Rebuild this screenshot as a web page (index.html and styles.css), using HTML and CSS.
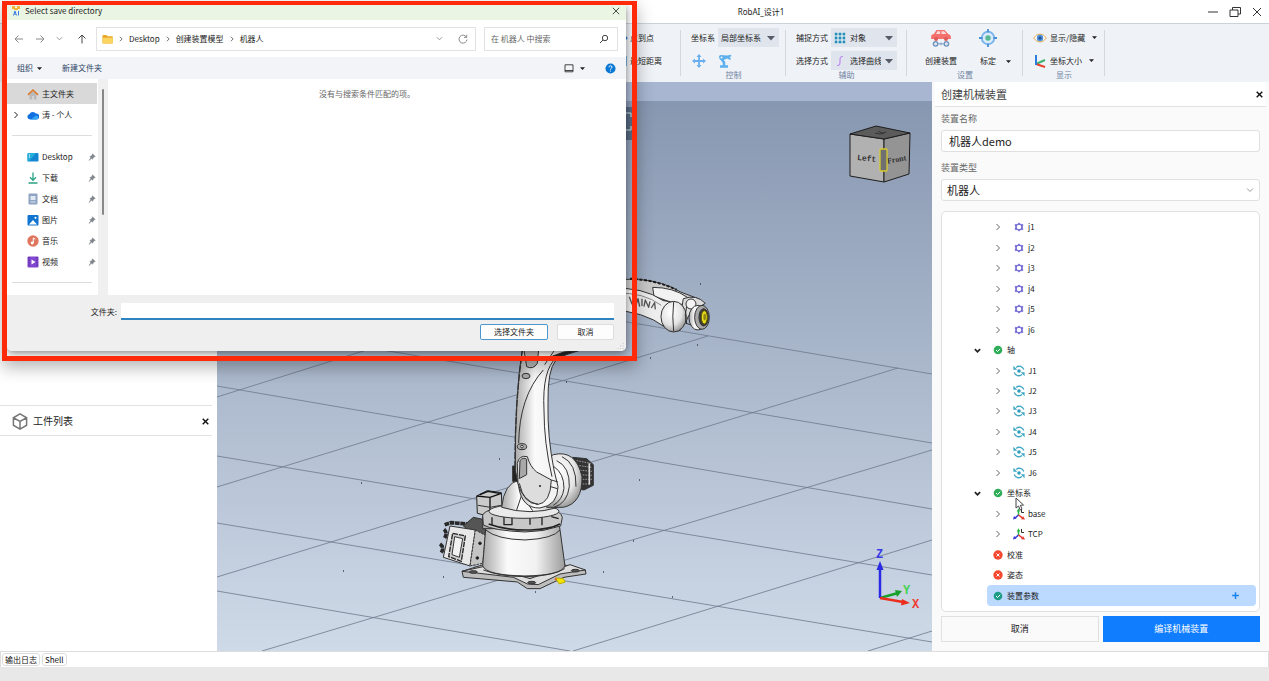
FILE: index.html
```html
<!DOCTYPE html>
<html lang="zh-CN">
  <head>
    <meta charset="utf-8" />
    <title>RobAI_设计1</title>
    <link rel="stylesheet" href="styles.css">
  </head>
  <body>
    <!-- shared icons -->
    <svg class="sprite" aria-hidden="true">
      <symbol id="i-right" viewBox="0 0 8 8"><path d="M2.5 1l3 3-3 3" fill="none" stroke="currentColor" /></symbol>
      <symbol id="i-down" viewBox="0 0 8 8"><path d="M1 2.5l3 3 3-3" fill="none" stroke="currentColor" /></symbol>
      <symbol id="i-caret" viewBox="0 0 8 8"><path d="M0 2h8L4 6.500z" fill="currentColor" /></symbol>
      <symbol id="i-close" viewBox="0 0 10 10"><path d="M1 1l8 8M9 1L1 9" fill="none" stroke="currentColor" /></symbol>
      <symbol id="i-ok" viewBox="0 0 10 10">
        <circle cx="5" cy="5" r="4.300" fill="currentColor" />
        <path d="M3 5l1.500 1.500L7.200 3.800" fill="none" stroke="#fff" />
      </symbol>
      <symbol id="i-bad" viewBox="0 0 10 10">
        <circle cx="5" cy="5" r="4.700" fill="#f5492f" />
        <path d="M3.500 3.500l3 3M6.500 3.500l-3 3" fill="none" stroke="#fff" />
      </symbol>
      <symbol id="i-link" viewBox="0 0 10 10">
        <path d="M5 .8l1.500 1.500 2.500.1-.6 2.600.6 2.600-2.500.1L5 9.200 3.500 7.700 1 7.600 1.600 5 1 2.400l2.500-.1z" fill="#6a62d2" stroke="#6a62d2" stroke-width=".5" />
        <circle cx="5" cy="5" r="2.300" fill="#fff" />
      </symbol>
      <symbol id="i-axis" viewBox="0 0 12 12">
        <path d="M3 2.400A5 5 0 0 1 10.800 4.500M9 9.600A5 5 0 0 1 1.200 7.500" fill="none" stroke="#3fa6c4" stroke-width="1.300" />
        <path d="M.4.8v4h3.800zM11.600 11.200v-4H7.800z" fill="#3fa6c4" />
        <circle cx="6" cy="6" r="1.800" fill="#2f9dbd" />
      </symbol>
      <symbol id="i-frame" viewBox="0 0 12 12">
        <path d="M5.500 7V2" stroke="#31b24a" stroke-width="1.500" /><path d="M3.700 3.500l1.800-3.300 1.800 3.300z" fill="#31b24a" />
        <path d="M5.500 7l-3.500 3" stroke="#3b37d8" stroke-width="1.500" /><path d="M0 11.500l1-3.500 2.500 2.500z" fill="#3b37d8" />
        <path d="M5.500 7l4 2.800" stroke="#e5362b" stroke-width="1.500" /><path d="M12 11.500l-4-.3 2.200-3z" fill="#e5362b" />
        <path d="M8.500 1v3.500H11" fill="none" stroke="#333" />
      </symbol>
      <symbol id="i-pin" viewBox="0 0 8 8">
        <path d="M4.500.8l2.800 2.700-1.500.5-1.300 2.300-1-1L1 7.500 2.800 4.700l-1-1L4 2.400z" fill="#80868d" stroke="#80868d" stroke-width=".5" />
      </symbol>
    </svg>

    <header class="titlebar">
      <span></span>
      <h1>RobAI_设计1</h1>
      <div class="window-buttons">
        <button aria-label="最小化"><svg viewBox="0 0 12 12"><path d="M1 6h10" stroke="#333" /></svg></button>
        <button aria-label="还原"><svg viewBox="0 0 12 12"><path d="M1 4h8v6.500H1zM3.500 4V1.500h8V8H9" fill="none" stroke="#333" /></svg></button>
        <button aria-label="关闭"><svg viewBox="0 0 12 12"><path d="M2 2l8 8M10 2l-8 8" stroke="#333" /></svg></button>
      </div>
    </header>

    <nav class="ribbon">
      <div class="group group-measure">
        <div class="row"><button><svg class="ico" viewBox="0 0 12 12"><path d="M1 6h10" stroke="#9ab" /><circle cx="10" cy="6" r="1.500" fill="#2384e0" /></svg>点到点</button></div>
        <div class="row"><button><svg class="ico" viewBox="0 0 12 12"><path d="M2 1v10M10 1v10" stroke="#7fb6ea" stroke-width="2" /></svg>最短距离</button></div>
      </div>
      <div class="group group-control">
        <div class="row">
          <label for="coord">坐标系</label>
          <div class="pick">
            <select id="coord"><option>局部坐标系</option></select>
            <svg class="caret"><use href="#i-caret" /></svg>
          </div>
        </div>
        <div class="row tools">
          <button aria-label="移动">
            <svg class="ico-l" viewBox="0 0 14 14"><path d="M7 2v10M2 7h10" stroke="#69aef0" stroke-width="1.800" /><path d="M7 0l2.500 3h-5zM7 14l2.500-3h-5zM0 7l3-2.500v5zM14 7l-3-2.500v5z" fill="#69aef0" /></svg>
          </button>
          <button aria-label="机械臂">
            <svg class="ico-l" viewBox="0 0 14 14"><path d="M2 12.500h8M6 12.500V8.500L3.500 5" fill="none" stroke="#5cb0ee" stroke-width="2.500" /><path d="M1 2.500q0-1.500 2-1.500l6 .5L13 .8l.5 1.500-2 .7 1.500 2-1 1-2.500-1.500L4 6.500Q1 6 1 2.500z" fill="#5cb0ee" /><circle cx="3.500" cy="3.500" r="1" fill="#eff2f7" /></svg>
          </button>
        </div>
        <p>控制</p>
      </div>
      <div class="group group-assist">
        <div class="row">
          <label for="snap">捕捉方式</label>
          <div class="pick">
            <svg class="ico" viewBox="0 0 12 12"><path d="M2 2h8v8H2zM6 2v8M2 6h8" fill="none" stroke="#8cc6dc" /><path d="M.8.8h2.400v2.400H.8zM4.800.8h2.400v2.400H4.800zM8.800.8h2.400v2.400H8.800zM.8 4.800h2.400v2.400H.8zM4.800 4.800h2.400v2.400H4.800zM8.800 4.800h2.400v2.400H8.800zM.8 8.800h2.400v2.400H.8zM4.800 8.800h2.400v2.400H4.800zM8.800 8.800h2.400v2.400H8.800z" fill="#258fba" /></svg>
            <select id="snap"><option>对象</option></select>
            <svg class="caret"><use href="#i-caret" /></svg>
          </div>
        </div>
        <div class="row">
          <label for="choose">选择方式</label>
          <div class="pick">
            <svg class="ico" viewBox="0 0 12 12"><path d="M3 10.500c3 0 3-1 3-4.500s0-4.500 3-4.500" fill="none" stroke="#bd8cf0" stroke-width="1.200" /></svg>
            <select id="choose"><option>选择曲线</option></select>
            <svg class="caret"><use href="#i-caret" /></svg>
          </div>
        </div>
        <p>辅助</p>
      </div>
      <div class="group group-setup">
        <div class="big-tools">
          <button>
            <svg viewBox="0 0 24 20"><path d="M1 11V8q0-2 3-2.500L7 1h9l4 4.500q3 .5 3 3V11H1z" fill="#f3706c" /><path d="M6.500 5.500L8 2.500h3v3zM12.500 2.500h3L18 5.500h-5.500z" fill="#fbdcd9" /><circle cx="6.500" cy="11" r="2.200" fill="#e05a57" /><circle cx="17.500" cy="11" r="2.200" fill="#e05a57" /><circle cx="6" cy="16.500" r="2.500" fill="#dfe6f0" stroke="#6e93bd" stroke-width="1.500" /><circle cx="18" cy="16.500" r="2.500" fill="#dfe6f0" stroke="#6e93bd" stroke-width="1.500" /><path d="M9 16.500h6M12 15v3" stroke="#6e93bd" /></svg>
            <span>创建装置</span>
          </button>
          <button>
            <svg viewBox="0 0 20 20"><circle cx="10" cy="10" r="7" fill="#dbeafa" stroke="#78b4ef" stroke-width="2" /><path d="M10 0v4M10 16v4M0 10h4M16 10h4" stroke="#4a8fd6" stroke-width="2" /><circle cx="10" cy="10" r="3" fill="#57b893" /></svg>
            <span>标定<svg class="caret-s"><use href="#i-caret" /></svg></span>
          </button>
        </div>
        <p>设置</p>
      </div>
      <div class="group group-show">
        <div class="row">
          <button>
            <svg class="ico-l" viewBox="0 0 14 14"><path d="M.5 7Q7-1 13.500 7 7 15 .5 7z" fill="#fff" stroke="#d8a94c" /><circle cx="7" cy="7" r="3.200" fill="#4b8fe0" /><circle cx="7" cy="7" r="1.600" fill="#24508f" /></svg>显示/隐藏<svg class="caret-s"><use href="#i-caret" /></svg>
          </button>
        </div>
        <div class="row">
          <button>
            <svg class="ico-l" viewBox="0 0 14 14"><path d="M3 10l9-4" stroke="#3cb371" stroke-width="2" /><path d="M3 10l9 3" stroke="#e8432e" stroke-width="2" /><path d="M3 1v10" stroke="#2b7de0" stroke-width="2" /></svg>坐标大小<svg class="caret-s"><use href="#i-caret" /></svg>
          </button>
        </div>
        <p>显示</p>
      </div>
    </nav>

    <main class="workspace">
      <aside class="left">
        <section class="model-list"></section>
        <section class="part-list">
          <header>
            <svg class="cube" viewBox="0 0 16 18"><path d="M8 1l7 4v8l-7 4-7-4V5zM1 5l7 4 7-4M8 9v8" fill="none" stroke="#777" stroke-width="1.600" /></svg>
            <h2>工件列表</h2>
            <button aria-label="关闭工件列表"><svg class="x"><use href="#i-close" /></svg></button>
          </header>
        </section>
      </aside>

      <section class="viewport">
        <svg class="scene" viewBox="217 82 715 569" preserveAspectRatio="xMidYMid slice">
          <defs>
            <linearGradient id="sky" x1="0" y1="0" x2="0" y2="1">
              <stop offset="0" stop-color="#8595af" />
              <stop offset="1" stop-color="#cfdae8" />
            </linearGradient>
            <linearGradient id="metal" x1="0" y1="0" x2="1" y2="0">
              <stop offset="0" stop-color="#a9a9a9" />
              <stop offset="0.300" stop-color="#fafafa" />
              <stop offset="0.650" stop-color="#f1f1f1" />
              <stop offset="1" stop-color="#9c9c9c" />
            </linearGradient>
            <radialGradient id="ball" cx="0.400" cy="0.350" r="0.700">
              <stop offset="0" stop-color="#fff" />
              <stop offset="0.600" stop-color="#e4e4e4" />
              <stop offset="1" stop-color="#8e8e8e" />
            </radialGradient>
          </defs>
          <rect x="217" y="82" width="715" height="569" fill="url(#sky)" />
          <rect x="217" y="82" width="715" height="19" fill="#a8b6d1" />
          <rect x="600" y="107" width="34" height="33" fill="#566882" />
          <path d="M626 113h5v4M626 130h5v-4" fill="none" stroke="#c9e4dd" />

          <!-- floor grid -->
          <g stroke="#6d788b" stroke-width="0.800">
            <path d="M217 252L932 374M217 322L932 443M217 386L932 509M217 456L932 575M217 523L932 642M217 591L570 651" />
            <path d="M217 397L430 330M217 487L708 336M217 577L898 368M262 651L932 450M573 651L932 540M868 651L932 631" />
          </g>
          <path d="M700 284h1M697 345h1M566 382h1M650 358h1M639 480h1M603 572h1M633 541h1M443 577h1M535 592h1M672 597h1M499 459h1M343 571h1M361 483h1" stroke="#39404c" stroke-width="1.500" />

          <!-- robot -->
          <g transform="translate(430 270) scale(0.3333)" stroke="#333" stroke-width="3" stroke-linejoin="round">
            <!-- upper arm -->
            <path d="M540 28L625 28Q700 34 752 66L810 88 800 120 700 90 540 60z" fill="#c9c9c9" />
            <path d="M668 52Q730 52 772 82L770 106Q720 100 672 78z" fill="#f2f2f2" />
            <path d="M600 26Q680 30 740 60" fill="none" stroke="#1c1c1c" stroke-width="6" stroke-dasharray="9 5" />
            <path d="M540 55Q640 50 700 92L745 98 752 180Q725 192 706 172 640 122 540 120z" fill="#eee" />
            <path d="M560 70Q640 66 694 106" fill="none" stroke="#888" />
            <path d="M598 80l8 22 6-16 6 20 6-20 5 24M636 86v22M642 110l4-20 10 22 4-18M664 114l10-16 2 20" fill="none" stroke="#555" stroke-width="4" />
            <path d="M760 86Q800 72 826 100L806 112Q780 118 766 160L750 150z" fill="#ddd" />
            <circle cx="783" cy="102" r="15" fill="#f4f4f4" />
            <ellipse cx="731" cy="140" rx="38" ry="46" fill="url(#ball)" />
            <path d="M731 96Q726 140 731 184" fill="none" />
            <path d="M768 160l20 6M770 110q-8 24 0 50" fill="none" />
            <ellipse cx="804" cy="143" rx="27" ry="37" fill="url(#metal)" />
            <ellipse cx="816" cy="142" rx="22" ry="36" fill="#a8a8a8" />
            <ellipse cx="821" cy="142" rx="14" ry="26" fill="#3a3a3a" />
            <ellipse cx="823" cy="142" rx="9" ry="20" fill="#e9dc1c" stroke="#5b5500" />
            <ellipse cx="824" cy="141" rx="4" ry="10" fill="#8f8714" stroke="none" />

            <!-- foot plate -->
            <path d="M96 904L160 884 260 900 400 884 466 900 468 912 402 922 330 956 292 956 262 936 100 922z" fill="#bdbdbd" />
            <path d="M96 904L168 888 300 926 420 884 466 900 390 912 325 944 292 942 250 922z" fill="#dedede" />
            <ellipse cx="130" cy="906" rx="12" ry="4" fill="#555" /><ellipse cx="436" cy="902" rx="12" ry="4" fill="#555" /><ellipse cx="305" cy="938" rx="12" ry="4" fill="#555" />

            <!-- cable box -->
            <path d="M44 764l18-6 50 4M42 778q12 10 2 26M30 822q14 10 4 26" fill="none" stroke="#282828" stroke-width="11" stroke-dasharray="14 2" />
            <path d="M100 768L130 742 168 750 166 795 140 800z" fill="#555" />
            <path d="M60 768L136 780 120 888 40 862z" fill="#e8e8e8" />
            <path d="M136 780L166 796 158 880 120 888z" fill="#c4c4c4" stroke-dasharray="7 3" />
            <path d="M68 790L106 798 94 874 56 860z" fill="#cfcfcf" stroke="#222" stroke-width="4" stroke-dasharray="16 3" />
            <path d="M74 800L98 806 88 862 66 854z" fill="#f2f2f2" />
            <circle cx="150" cy="820" r="4" fill="#111" /><circle cx="142" cy="864" r="4" fill="#111" />

            <!-- base cylinder -->
            <path d="M168 765L158 888Q170 916 285 918 395 916 405 888L388 765z" fill="url(#metal)" />
            <path d="M167 780Q200 808 285 810 370 806 390 780M160 900Q210 920 290 920 370 918 404 896" fill="none" />

            <!-- left motor -->
            <path d="M158 740h52v36h-52z" fill="#aaa" />
            <path d="M140 678L172 662 214 668 216 710 200 745 142 730z" fill="#cbcbcb" stroke="#222" />
            <path d="M140 678L180 682 214 670M180 682V730M150 674l24-10 34 6" fill="none" stroke="#111" stroke-width="4" />
            <path d="M144 706l36 6 34-6" fill="none" />

            <!-- turret -->
            <path d="M158 735Q170 710 285 708 390 710 397 742L392 768Q340 786 285 786 190 782 160 765z" fill="#c8c8c8" />
            <path d="M176 762Q230 782 300 780 360 778 390 762" fill="none" stroke="#222" stroke-width="5" />
            <path d="M222 738v26h24v-22M300 742v22M336 738v28M364 740l22 6M186 742v22" fill="none" stroke="#222" stroke-width="4" />
            <ellipse cx="282" cy="724" rx="105" ry="21" fill="#eaeaea" />
            <path d="M215 712Q222 640 268 630L340 650 385 712Q300 738 215 712z" fill="url(#metal)" />
            <path d="M276 672L260 720M286 690l22 32" fill="none" />

            <!-- shoulder motor -->
            <path d="M428 562L470 566 490 584 490 646 462 660 436 656z" fill="#333" />
            <path d="M440 572l42 8M440 586l44 6M442 600l44 4M442 614l44 2M442 628h44M442 642h40" stroke="#999" stroke-dasharray="5 3" />
            <path d="M478 580v64" stroke="#ddd" stroke-width="5" />
            <path d="M370 554Q438 538 456 620 458 700 400 712L350 712 345 570z" fill="url(#ball)" />
            <path d="M380 572Q420 590 418 650 412 700 372 712M372 590Q402 610 402 655 398 690 370 706M396 560Q440 580 438 650" fill="none" />

            <!-- lower arm -->
            <path d="M248 588h16v46h-16z" fill="#222" />
            <path d="M278 230Q254 380 256 600L266 650Q276 716 330 714 384 706 384 650L372 600Q352 500 354 400 352 300 378 270L450 230z" fill="url(#metal)" />
            <path d="M278 235Q254 400 255 600" fill="none" stroke-width="4" stroke-dasharray="22 4" />
            <path d="M340 300Q268 380 266 520M380 262Q336 300 342 420 342 520 366 620M374 240l-30 44" fill="none" />
            <path d="M282 240L290 290Q310 300 322 280L326 240z" fill="#bcbcbc" />
            <path d="M368 258l34-12 44-4-50 16z" fill="#222" />
            <ellipse cx="288" cy="318" rx="12" ry="8" fill="#aaa" /><ellipse cx="276" cy="530" rx="14" ry="9" fill="#aaa" /><circle cx="276" cy="530" r="4" fill="#eee" />
            <path d="M262 580Q268 554 292 560 300 590 320 606L364 630Q362 700 322 704 276 690 264 640z" fill="#ddd" />
            <path d="M270 572q10-12 20-4v46l-22 12z" fill="#a8a8a8" />
            <path d="M364 630l20 6M362 650l20 6M268 640q14 64 56 62" fill="none" />
            <circle cx="330" cy="648" r="2" fill="#222" />
            <path d="M376 924l24 2 6 10-18 6z" fill="#f2e500" stroke="#b9a800" /><circle cx="377" cy="928" r="3" fill="#e53" stroke="none" />
          </g>

          <!-- view cube -->
          <g stroke="#1e1e1e" stroke-linejoin="round">
            <path d="M850 134l34 5v43l-34-6z" fill="#b1b1b1" />
            <path d="M884 139l26-6-1 41-25 8z" fill="#949494" />
            <path d="M850 134l26-8 34 7-26 6z" fill="#5b5b5b" />
            <path d="M875 133l5 1 6-2M878 131l6 3" fill="none" stroke="#333" />
          </g>
          <g class="cube-text">
            <text x="857" y="161" transform="rotate(5 867 160)">Left</text>
            <text class="front" x="887" y="162" transform="rotate(-10 897 160)">Front</text>
          </g>
          <rect x="880" y="149" width="7" height="22" rx="1" fill="#707070" stroke="#d8cb2c" stroke-width="1.300" />

          <!-- axis triad -->
          <g class="triad">
            <path d="M880 598l18-5" stroke="#17a02b" stroke-width="2.500" /><path d="M895 590l7 1-5 6z" fill="#17a02b" />
            <path d="M880 598V568" stroke="#2a2ae6" stroke-width="2.500" /><path d="M876.500 570l3.500-9 3.500 9z" fill="#2a2ae6" />
            <path d="M880 598l23 4" stroke="#ec2d1c" stroke-width="2.500" /><path d="M902 599l8 4-9 2.500z" fill="#ec2d1c" />
            <text x="876" y="558" fill="#3a3ae8">Z</text>
            <text x="903" y="594" fill="#3fd44f">Y</text>
            <text x="912" y="608" fill="#f03a2c">X</text>
          </g>
        </svg>
      </section>

      <aside class="right">
        <header>
          <h2>创建机械装置</h2>
          <button aria-label="关闭面板"><svg class="x"><use href="#i-close" /></svg></button>
        </header>
        <form class="device-form">
          <label for="dev-name">装置名称</label>
          <input id="dev-name" type="text" value="机器人demo" />
          <label for="dev-type">装置类型</label>
          <div class="select-box">
            <select id="dev-type"><option>机器人</option></select>
            <svg><use href="#i-down" /></svg>
          </div>
          <ul class="tree">
            <li class="l2"><svg class="chev"><use href="#i-right" /></svg><svg class="node sm"><use href="#i-link" /></svg>j1</li>
            <li class="l2"><svg class="chev"><use href="#i-right" /></svg><svg class="node sm"><use href="#i-link" /></svg>j2</li>
            <li class="l2"><svg class="chev"><use href="#i-right" /></svg><svg class="node sm"><use href="#i-link" /></svg>j3</li>
            <li class="l2"><svg class="chev"><use href="#i-right" /></svg><svg class="node sm"><use href="#i-link" /></svg>j4</li>
            <li class="l2"><svg class="chev"><use href="#i-right" /></svg><svg class="node sm"><use href="#i-link" /></svg>j5</li>
            <li class="l2"><svg class="chev"><use href="#i-right" /></svg><svg class="node sm"><use href="#i-link" /></svg>j6</li>
            <li class="l1"><svg class="chev open"><use href="#i-down" /></svg><svg class="node sm ok"><use href="#i-ok" /></svg>轴</li>
            <li class="l2"><svg class="chev"><use href="#i-right" /></svg><svg class="node"><use href="#i-axis" /></svg>J1</li>
            <li class="l2"><svg class="chev"><use href="#i-right" /></svg><svg class="node"><use href="#i-axis" /></svg>J2</li>
            <li class="l2"><svg class="chev"><use href="#i-right" /></svg><svg class="node"><use href="#i-axis" /></svg>J3</li>
            <li class="l2"><svg class="chev"><use href="#i-right" /></svg><svg class="node"><use href="#i-axis" /></svg>J4</li>
            <li class="l2"><svg class="chev"><use href="#i-right" /></svg><svg class="node"><use href="#i-axis" /></svg>J5</li>
            <li class="l2"><svg class="chev"><use href="#i-right" /></svg><svg class="node"><use href="#i-axis" /></svg>J6</li>
            <li class="l1"><svg class="chev open"><use href="#i-down" /></svg><svg class="node sm ok"><use href="#i-ok" /></svg>坐标系
              <svg class="cursor" viewBox="0 0 10 14"><path d="M1 1v10l2.500-2 1.700 4 1.800-.8L5.400 8.300 8.500 8z" fill="#fff" stroke="#444" /></svg>
            </li>
            <li class="l2"><svg class="chev"><use href="#i-right" /></svg><svg class="node"><use href="#i-frame" /></svg>base</li>
            <li class="l2"><svg class="chev"><use href="#i-right" /></svg><svg class="node"><use href="#i-frame" /></svg>TCP</li>
            <li class="leaf"><svg class="node sm"><use href="#i-bad" /></svg>校准</li>
            <li class="leaf"><svg class="node sm"><use href="#i-bad" /></svg>姿态</li>
            <li class="leaf selected"><svg class="node sm"><use href="#i-ok" /></svg>装置参数
              <button type="button" aria-label="添加参数"><svg viewBox="0 0 8 8"><path d="M4 1v6M1 4h6" stroke="#1684f0" stroke-width="1.300" /></svg></button>
            </li>
          </ul>
          <div class="actions">
            <button type="button">取消</button>
            <button type="submit" class="primary">编译机械装置</button>
          </div>
        </form>
      </aside>
    </main>

    <div class="logbar">
      <button>输出日志</button>
      <button>Shell</button>
    </div>
    <footer class="statusbar"></footer>

    <!-- save dialog with the red highlight frame -->
    <div class="highlight">
      <div class="dialog" role="dialog" aria-labelledby="dlg-title">
        <div class="dlg-title">
          <svg viewBox="0 0 10 10"><path d="M1 0h3v3H1zM6 0h3v3H6zM3 2h4v2H3z" fill="#f2b33a" /><path d="M2.500 9.500L4 5l1.500 4.500M3 8h2M7.500 5v4.500" fill="none" stroke="#3d7fe0" /></svg>
          <span id="dlg-title">Select save directory</span>
          <button aria-label="关闭对话框"><svg class="x-thin"><use href="#i-close" /></svg></button>
        </div>
        <div class="dlg-nav">
          <button aria-label="后退" class="dim"><svg viewBox="0 0 10 10"><path d="M9 5H1M4.500 1.500L1 5l3.500 3.500" fill="none" stroke="currentColor" /></svg></button>
          <button aria-label="前进" class="dim"><svg viewBox="0 0 10 10"><path d="M1 5h8M5.500 1.500L9 5 5.500 8.500" fill="none" stroke="currentColor" /></svg></button>
          <button aria-label="最近位置" class="dim"><svg class="tiny"><use href="#i-down" /></svg></button>
          <button aria-label="上移"><svg viewBox="0 0 10 10"><path d="M5 9.500V1M1.500 4.500L5 1l3.500 3.500" fill="none" stroke="currentColor" /></svg></button>
          <div class="address">
            <svg class="folder" viewBox="0 0 12 10"><path d="M.5 1.500q0-1 1-1H5l1.200 1.500H11q.8 0 .8.800V9q0 .8-.8.800H1.300Q.5 9.800.5 9z" fill="#e9a829" /><path d="M.5 3.500h11.300V9q0 .8-.8.800H1.300Q.5 9.800.5 9z" fill="#fcd462" /></svg>
            <svg class="sep"><use href="#i-right" /></svg>
            <a href="#">Desktop</a>
            <svg class="sep"><use href="#i-right" /></svg>
            <a href="#">创建装置模型</a>
            <svg class="sep"><use href="#i-right" /></svg>
            <a href="#">机器人</a>
            <span class="space"></span>
            <button aria-label="历史" class="dim"><svg class="tiny"><use href="#i-down" /></svg></button>
            <button aria-label="刷新" class="dim"><svg viewBox="0 0 10 10"><path d="M8.500 3.200A4 4 0 1 0 9 5.500M8.700.8v2.600H6" fill="none" stroke="currentColor" /></svg></button>
          </div>
          <div class="search">
            <input type="text" aria-label="搜索" placeholder="在 机器人 中搜索" />
            <svg viewBox="0 0 10 10"><circle cx="6" cy="4" r="2.700" fill="none" stroke="#444" /><path d="M4 6L1 9" stroke="#444" /></svg>
          </div>
        </div>
        <div class="dlg-tools">
          <button>组织<svg class="caret-s"><use href="#i-caret" /></svg></button>
          <button>新建文件夹</button>
          <span class="space"></span>
          <button aria-label="视图"><svg class="view" viewBox="0 0 10 9"><path d="M1 .8h8v7H1zM1 6.500h8" fill="none" stroke="#444" /></svg><svg class="caret-s"><use href="#i-caret" /></svg></button>
          <button aria-label="帮助"><svg class="help" viewBox="0 0 12 12"><circle cx="6" cy="6" r="5.500" fill="#0a78d4" /><path d="M4.300 4.700Q4.500 3 6 3t1.700 1.500Q7.700 5.400 6 6.500v.7M6 8.300v1" fill="none" stroke="#fff" /></svg></button>
        </div>
        <div class="dlg-body">
          <ul class="places">
            <li class="active"><svg class="place" viewBox="0 0 12 12"><path d="M2.500 6v5.500h2.700V8h1.600v3.500h2.700V6L6 3z" fill="#b9b9b9" /><path d="M1 6.800L6 2l5 4.800" fill="none" stroke="#dd7b2c" stroke-width="1.600" /></svg>主文件夹</li>
            <li><svg class="expand"><use href="#i-right" /></svg><svg class="place" viewBox="0 0 12 12"><path d="M3 10.500a2.800 2.800 0 0 1-.5-5.500A3.800 3.800 0 0 1 9 4.500a3 3 0 0 1 .5 6z" fill="#1271e0" /><path d="M4 10.500l5-4q2.500.5 2.500 2.200T9.500 10.500z" fill="#36a7f5" /></svg>涛 - 个人</li>
            <li class="rule"><hr /></li>
            <li><svg class="place" viewBox="0 0 12 12"><rect x=".5" y="2" width="11" height="8.500" rx="1" fill="#1587d1" /><path d="M.5 3v6.500q0 1 1 1L9 2H1.500q-1 0-1 1z" fill="#28b0dd" /><path d="M2 4h1M2 6h1" stroke="#fff" /></svg>Desktop<svg class="pin"><use href="#i-pin" /></svg></li>
            <li><svg class="place" viewBox="0 0 12 12"><path d="M6 .5v7.500M3 5.300l3 3 3-3M1.500 11h9" fill="none" stroke="#2aa287" stroke-width="1.300" /></svg>下载<svg class="pin"><use href="#i-pin" /></svg></li>
            <li><svg class="place" viewBox="0 0 12 12"><rect x="1.500" y=".5" width="9" height="11" rx="1" fill="#8ea4c2" /><path d="M3.500 3h5v4h-5z" fill="#dfe8f4" /><path d="M3.500 9h5" stroke="#dfe8f4" /></svg>文档<svg class="pin"><use href="#i-pin" /></svg></li>
            <li><svg class="place" viewBox="0 0 12 12"><rect x=".5" y="1" width="11" height="10.500" rx="1" fill="#0f74cf" /><path d="M2 10.500L6 6l4 4.500z" fill="#fff" /><circle cx="8.500" cy="3.800" r="1.100" fill="#fff" /></svg>图片<svg class="pin"><use href="#i-pin" /></svg></li>
            <li><svg class="place" viewBox="0 0 12 12"><circle cx="6" cy="6" r="5.700" fill="#df7660" /><circle cx="5.200" cy="8" r="1.400" fill="#fff" /><path d="M6.300 8V3l2 1.200" fill="none" stroke="#fff" /></svg>音乐<svg class="pin"><use href="#i-pin" /></svg></li>
            <li><svg class="place" viewBox="0 0 12 12"><rect x=".5" y=".5" width="11" height="11" rx="1" fill="#8247d0" /><path d="M2 1v10M10 1v10" stroke="#532a9a" stroke-dasharray="1.500 1" /><path d="M4.500 3.500L8.500 6l-4 2.500z" fill="#fff" /></svg>视频<svg class="pin"><use href="#i-pin" /></svg></li>
            <li class="rule"><hr /></li>
          </ul>
          <div class="scroll"><div class="thumb"></div></div>
          <div class="files">没有与搜索条件匹配的项。</div>
        </div>
        <div class="dlg-foot">
          <label for="folder">文件夹:</label>
          <input id="folder" type="text" />
          <div class="dlg-buttons">
            <button class="default">选择文件夹</button>
            <button>取消</button>
          </div>
          <svg class="grip" viewBox="0 0 8 8"><path d="M7 1v1M7 4v1M7 7v1M4 4v1M4 7v1M1 7v1" stroke="#bbb" /></svg>
        </div>
      </div>
    </div>
  </body>
</html>
```
FILE: styles.css
```css
* {
  box-sizing: border-box;
}
body,
h1,
h2,
p,
ul,
li {
  margin: 0;
  padding: 0;
}
body {
  display: flex;
  flex-direction: column;
  height: 100vh;
  overflow: hidden;
  background: #fff;
  color: #222;
  font-family: "Noto Sans CJK SC", "Noto Sans", sans-serif;
  font-size: 8px;
  line-height: 12px;
}
button,
input,
select {
  font: inherit;
  color: inherit;
  margin: 0;
  padding: 0;
  border: 0;
  background: none;
  border-radius: 0;
}
button {
  display: flex;
  align-items: center;
  cursor: pointer;
}
select {
  appearance: none;
}
h1,
h2 {
  font-weight: normal;
}
ul {
  list-style: none;
}
svg {
  display: block;
  flex: none;
}
.sprite {
  position: absolute;
  width: 0;
  height: 0;
}
.space {
  flex: 1;
}

/* Title bar */
.titlebar {
  display: grid;
  grid-template-columns: 315px 1fr auto;
  align-items: center;
  height: 23px;
  flex: none;
}
.titlebar h1 {
  font-size: 8px;
  text-align: center;
  font-family: "Noto Sans", "Noto Sans CJK SC", sans-serif;
}
.window-buttons {
  display: flex;
  gap: 10px;
  padding-right: 6px;
}
.window-buttons svg {
  width: 12px;
  height: 12px;
}

/* Ribbon */
.ribbon {
  display: flex;
  height: 59px;
  flex: none;
  background: #eff2f7;
  border-top: 1px solid #ccd2dc;
}
.group {
  position: relative;
  display: flex;
  flex-direction: column;
  gap: 4px;
  padding: 4px 0 0 10px;
  flex: none;
}
.group::after {
  content: "";
  position: absolute;
  right: 0;
  top: 6px;
  bottom: 6px;
  border-right: 1px solid #d3d8e0;
}
.group p {
  margin-top: -5px;
  margin-left: -10px;
  text-align: center;
  color: #7085a3;
}
.group-measure {
  width: 681px;
  padding-left: 616px;
}
.group-control {
  width: 105px;
}
.group-assist {
  width: 121px;
}
.group-setup {
  width: 116px;
}
.group-show {
  width: 82px;
}
.row {
  display: flex;
  align-items: center;
  height: 19px;
  gap: 3px;
}
.row label {
  flex: none;
}
.row button {
  gap: 3px;
}
.group-measure .row button {
  gap: 2px;
}
.row.tools {
  gap: 12px;
  padding-left: 1px;
}
.pick {
  display: flex;
  align-items: center;
  gap: 4px;
  flex: 1;
  min-width: 0;
  height: 19px;
  margin-right: 7px;
  padding: 0 4px 0 3px;
  background: #dfe4ed;
}
.group-assist .pick {
  margin-right: 10px;
}
.pick select {
  flex: 1;
  min-width: 0;
}
.ico {
  width: 12px;
  height: 12px;
}
.ico-l {
  width: 14px;
  height: 14px;
}
.caret {
  width: 8px;
  height: 8px;
  color: #555c68;
}
.caret-s {
  width: 5px;
  height: 5px;
  margin-left: 4px;
  color: #222;
}
.big-tools {
  display: flex;
  gap: 20px;
  padding-left: 8px;
  height: 42px;
}
.big-tools button {
  flex-direction: column;
  justify-content: space-between;
  padding: 1px 0 3px;
}
.big-tools button > svg {
  height: 18px;
  width: 22px;
}
.big-tools span {
  display: flex;
  align-items: center;
}
.big-tools .caret-s {
  margin-left: 10px;
  margin-right: -15px;
}

/* Workspace */
.workspace {
  display: flex;
  flex: 1;
  min-height: 0;
}
.left {
  display: flex;
  flex-direction: column;
  width: 217px;
  background: #fff;
}
.model-list {
  flex: 323;
}
.part-list {
  flex: 246;
}
.part-list header {
  display: flex;
  align-items: center;
  gap: 5px;
  height: 31px;
  margin-right: 5px;
  padding: 1px 3px 0 12px;
  border-top: 1px solid #e2e2e2;
  border-bottom: 1px solid #e2e2e2;
}
.part-list h2 {
  flex: 1;
  font-size: 10px;
}
.cube {
  width: 16px;
  height: 17px;
}
.x {
  width: 7px;
  height: 7px;
  color: #111;
  stroke-width: 2px;
}
.viewport {
  flex: 1;
  min-width: 0;
}
.scene {
  width: 100%;
  height: 100%;
}
.cube-text {
  font: bold 8px "Liberation Mono", monospace;
  fill: #333;
}
.front {
  font-family: "Liberation Serif", serif;
}
.triad {
  font: bold 12px "Liberation Mono", monospace;
}

/* Device panel */
.right {
  display: flex;
  flex-direction: column;
  width: 337px;
  background: #fafafa;
}
.right header {
  display: flex;
  align-items: center;
  justify-content: space-between;
  height: 25px;
  margin: 0 3px;
  padding: 0 3px 0 6px;
  background: #fff;
  border-bottom: 1px solid #e2e2e2;
}
.right h2 {
  font-size: 11px;
  color: #444;
}
.device-form {
  display: flex;
  flex-direction: column;
  flex: 1;
  min-height: 0;
  padding: 6px 9px 9px;
}
.device-form > label {
  font-size: 9px;
  color: #666;
  height: 17px;
}
.device-form > input,
.select-box {
  height: 22px;
  margin-bottom: 10px;
  padding: 0 7px;
  font-size: 11px;
  background: #fff;
  border: 1px solid #e0e0e0;
  border-radius: 3px;
}
.select-box {
  display: flex;
  align-items: center;
  padding: 0 5px;
}
.select-box select {
  flex: 1;
}
.select-box svg {
  width: 8px;
  height: 8px;
  color: #999;
}
.tree {
  display: flex;
  flex-direction: column;
  flex: 1;
  min-height: 0;
  padding: 5px 3px 5px 0;
  background: #fff;
  border: 1px solid #e0e0e0;
  border-radius: 5px;
}
.tree li {
  position: relative;
  display: flex;
  align-items: center;
  flex: 1;
  gap: 2px;
  min-height: 0;
}
.l1 {
  padding-left: 29px;
}
.l2 {
  padding-left: 50px;
}
.leaf {
  margin-left: 45px;
  padding-left: 4px;
}
.selected {
  background: #bcdaff;
  border-radius: 4px;
}
.selected .node {
  color: #1f9c86;
}
.selected button {
  margin-left: auto;
  margin-right: 16px;
}
.selected button svg {
  width: 9px;
  height: 9px;
}
.chev {
  width: 8px;
  height: 8px;
  margin: 0 8px 0 2px;
  color: #666;
}
.tree .open {
  width: 7px;
  height: 7px;
  margin-left: 3px;
  color: #222;
  stroke-width: 2px;
}
.node {
  width: 12px;
  height: 12px;
  margin: 0 1px;
}
.sm {
  width: 10px;
  height: 10px;
  margin: 0 2px;
}
.ok {
  color: #2fad58;
}
.cursor {
  position: absolute;
  left: 73px;
  top: 14px;
  width: 10px;
  height: 14px;
  z-index: 1;
}
.actions {
  display: grid;
  grid-template-columns: 1fr 1fr;
  gap: 4px;
  margin-top: 4px;
}
.actions button {
  justify-content: center;
  height: 26px;
  font-size: 9px;
  border: 1px solid #e0e0e0;
}
.actions .primary {
  background: #107dff;
  border-color: #107dff;
  color: #fff;
}

/* Bottom bars */
.logbar {
  display: flex;
  gap: 2px;
  height: 16px;
  flex: none;
  padding: 1px 1px;
  border: 1px solid #ddd;
  border-width: 1px 1px 0;
}
.logbar button {
  height: 13px;
  padding: 0 2px;
  color: #111;
  border: 1px solid #ddd;
  border-radius: 3px;
}
.statusbar {
  height: 14px;
  flex: none;
  background: #e8e8e8;
}

/* Save dialog */
.highlight {
  position: absolute;
  left: 2px;
  top: 1px;
  width: 635px;
  height: 360px;
  padding: 0 6px 5px 0;
  border: 5px solid #ff2a0a;
  border-top-width: 4px;
  box-shadow: 0 6px 16px rgba(0, 0, 0, 0.3);
}
.dialog {
  display: flex;
  flex-direction: column;
  height: 100%;
  background: #fff;
  border-radius: 0 0 5px 5px;
  box-shadow: 0 2px 8px rgba(0, 0, 0, 0.5);
  clip-path: inset(0 -6px -5px 0);
}
.dlg-title {
  display: flex;
  align-items: center;
  gap: 4px;
  height: 15px;
  padding: 0 6px 3px 4px;
  background: #ebf5e4;
}
.dlg-title span {
  flex: 1;
}
.dlg-title svg {
  width: 10px;
  height: 10px;
}
.dlg-title .x-thin {
  width: 8px;
  height: 8px;
}
.dlg-nav {
  display: flex;
  align-items: center;
  height: 37px;
  padding: 0 8px 0 7px;
  color: #444;
}
.dlg-nav > button {
  width: 21px;
}
.dlg-nav svg {
  width: 10px;
  height: 10px;
}
.dlg-nav .tiny {
  width: 7px;
  height: 7px;
}
.dlg-nav .dim {
  color: #8a8a8a;
}
.address {
  display: flex;
  align-items: center;
  gap: 5px;
  flex: 1;
  height: 24px;
  margin-right: 8px;
  margin-left: -2px;
  padding: 0 7px 0 5px;
  border: 1px solid #e2e2e2;
}
.address a {
  color: #222;
  text-decoration: none;
}
.address .folder {
  width: 11px;
}
.address .sep {
  width: 6px;
  height: 6px;
}
.address button + button {
  margin-left: 10px;
}
.search {
  display: flex;
  align-items: center;
  width: 134px;
  height: 24px;
  padding: 0 8px 0 6px;
  border: 1px solid #e2e2e2;
}
.search input {
  flex: 1;
  min-width: 0;
}
.search input::placeholder {
  color: #666;
}
.dlg-tools {
  display: flex;
  align-items: center;
  gap: 20px;
  height: 22px;
  padding: 0 10px;
  background: #f3f4f7;
  color: #2b4468;
}
.view {
  width: 10px;
  height: 9px;
  margin-right: 2px;
}
.help {
  width: 11px;
  height: 11px;
}
.dlg-body {
  display: flex;
  flex: 1;
  min-height: 0;
}
.places {
  width: 91px;
  padding-top: 4px;
}
.places li {
  display: flex;
  align-items: center;
  gap: 3px;
  height: 21px;
  padding: 0 2px 0 20px;
}
.places .active {
  background: #d9d9d9;
  margin-right: 1px;
}
.places .rule {
  padding: 0 6px 0 5px;
}
.places hr {
  width: 100%;
  margin: 0;
  border: 0;
  border-top: 1px solid #ddd;
}
.place {
  width: 12px;
  height: 12px;
}
.expand {
  width: 8px;
  height: 8px;
  margin-left: -15px;
  margin-right: 4px;
}
.pin {
  width: 8px;
  height: 8px;
  margin-left: auto;
}
.scroll {
  width: 10px;
  padding: 10px 4px 0;
  background: #f0f0f0;
}
.thumb {
  height: 126px;
  background: #888;
  border-radius: 1px;
}
.files {
  flex: 1;
  padding-top: 9px;
  text-align: center;
  color: #666;
}
.dlg-foot {
  position: relative;
  display: grid;
  grid-template-columns: 110px 1fr;
  row-gap: 4px;
  column-gap: 4px;
  align-content: start;
  height: 56px;
  padding: 8px 12px 0 0;
  background: #efefef;
  border-radius: 0 0 5px 5px;
}
.dlg-foot label {
  text-align: right;
  line-height: 17px;
}
.dlg-foot input {
  height: 17px;
  background: #fff;
  border-bottom: 2px solid #2f83c1;
}
.dlg-buttons {
  grid-column: 2;
  display: flex;
  justify-content: flex-end;
  gap: 9px;
}
.dlg-buttons button {
  justify-content: center;
  width: 57px;
  height: 16px;
  background: #fdfdfd;
  border: 1px solid #ddd;
  border-radius: 2px;
}
.dlg-buttons .default {
  width: 68px;
  border-color: #4a98d3;
}
.grip {
  position: absolute;
  right: 2px;
  bottom: 2px;
  width: 7px;
  height: 7px;
}
```
